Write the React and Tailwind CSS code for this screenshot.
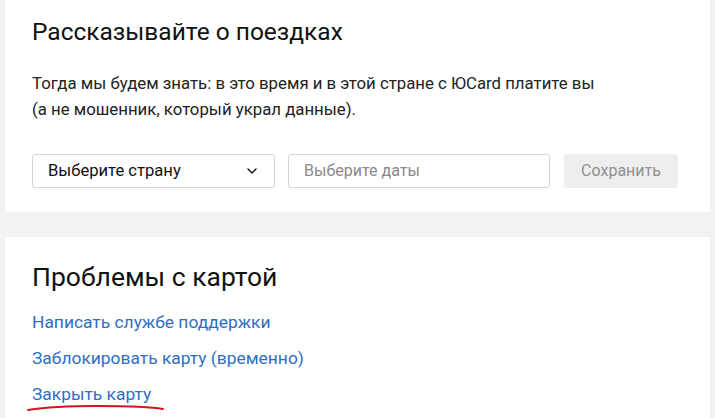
import { ChevronDown } from "lucide-react";

export default function App() {
  return (
    <div
      className="min-h-[418px] w-[715px] bg-[#f3f2f1] px-[5px] text-[#111]"
      style={{ fontFamily: "Roboto, 'Liberation Sans', sans-serif" }}
    >
      <section className="h-[212px] bg-white px-[27px] pt-[16px]">
        <h2 className="text-[24.5px] leading-[32px] text-[#111]">Рассказывайте о поездках</h2>
        <p className="mt-[22px] text-[16.8px] leading-[26px] text-[#222]">
          Тогда мы будем знать: в это время и в этой стране с ЮCard платите вы
          <br />
          (а не мошенник, который украл данные).
        </p>
        <div className="mt-[32px] flex items-center">
          <button className="flex h-[34px] w-[243px] items-center justify-between rounded-[3px] border border-[#d6d6d6] bg-white pl-[15px] pr-[14px] text-[16.6px] text-[#111]">
            <span>Выберите страну</span>
            <ChevronDown className="h-[16px] w-[16px]" strokeWidth={2} />
          </button>
          <div className="ml-[13px] flex h-[34px] w-[262px] items-center rounded-[3px] border border-[#d6d6d6] bg-white px-[15px] text-[16px] text-[#8a8a8a]">
            Выберите даты
          </div>
          <button className="ml-[14px] h-[34px] w-[114px] rounded-[3px] bg-[#eeeeee] text-[16px] text-[#8f8f8f]">
            Сохранить
          </button>
        </div>
      </section>

      <section className="mt-[25px] h-[181px] bg-white px-[27px] pt-[23px]">
        <h2 className="text-[26.5px] leading-[34px] text-[#111]">Проблемы с картой</h2>
        <ul className="mt-[15px] flex flex-col gap-[9px] text-[17.4px] leading-[27px] text-[#2e6ec4]">
          <li>Написать службе поддержки</li>
          <li>Заблокировать карту (временно)</li>
          <li className="relative inline-block w-fit">
            Закрыть карту
            <svg
              className="absolute left-[-5px] top-[22px]"
              width="140"
              height="10"
              viewBox="0 0 140 10"
              fill="none"
            >
              <path
                d="M1 7 C 20 4, 45 3, 70 3 C 95 3, 120 3, 136 6"
                stroke="#d0151c"
                strokeWidth="1.8"
                strokeLinecap="round"
              />
            </svg>
          </li>
        </ul>
      </section>
    </div>
  );
}
